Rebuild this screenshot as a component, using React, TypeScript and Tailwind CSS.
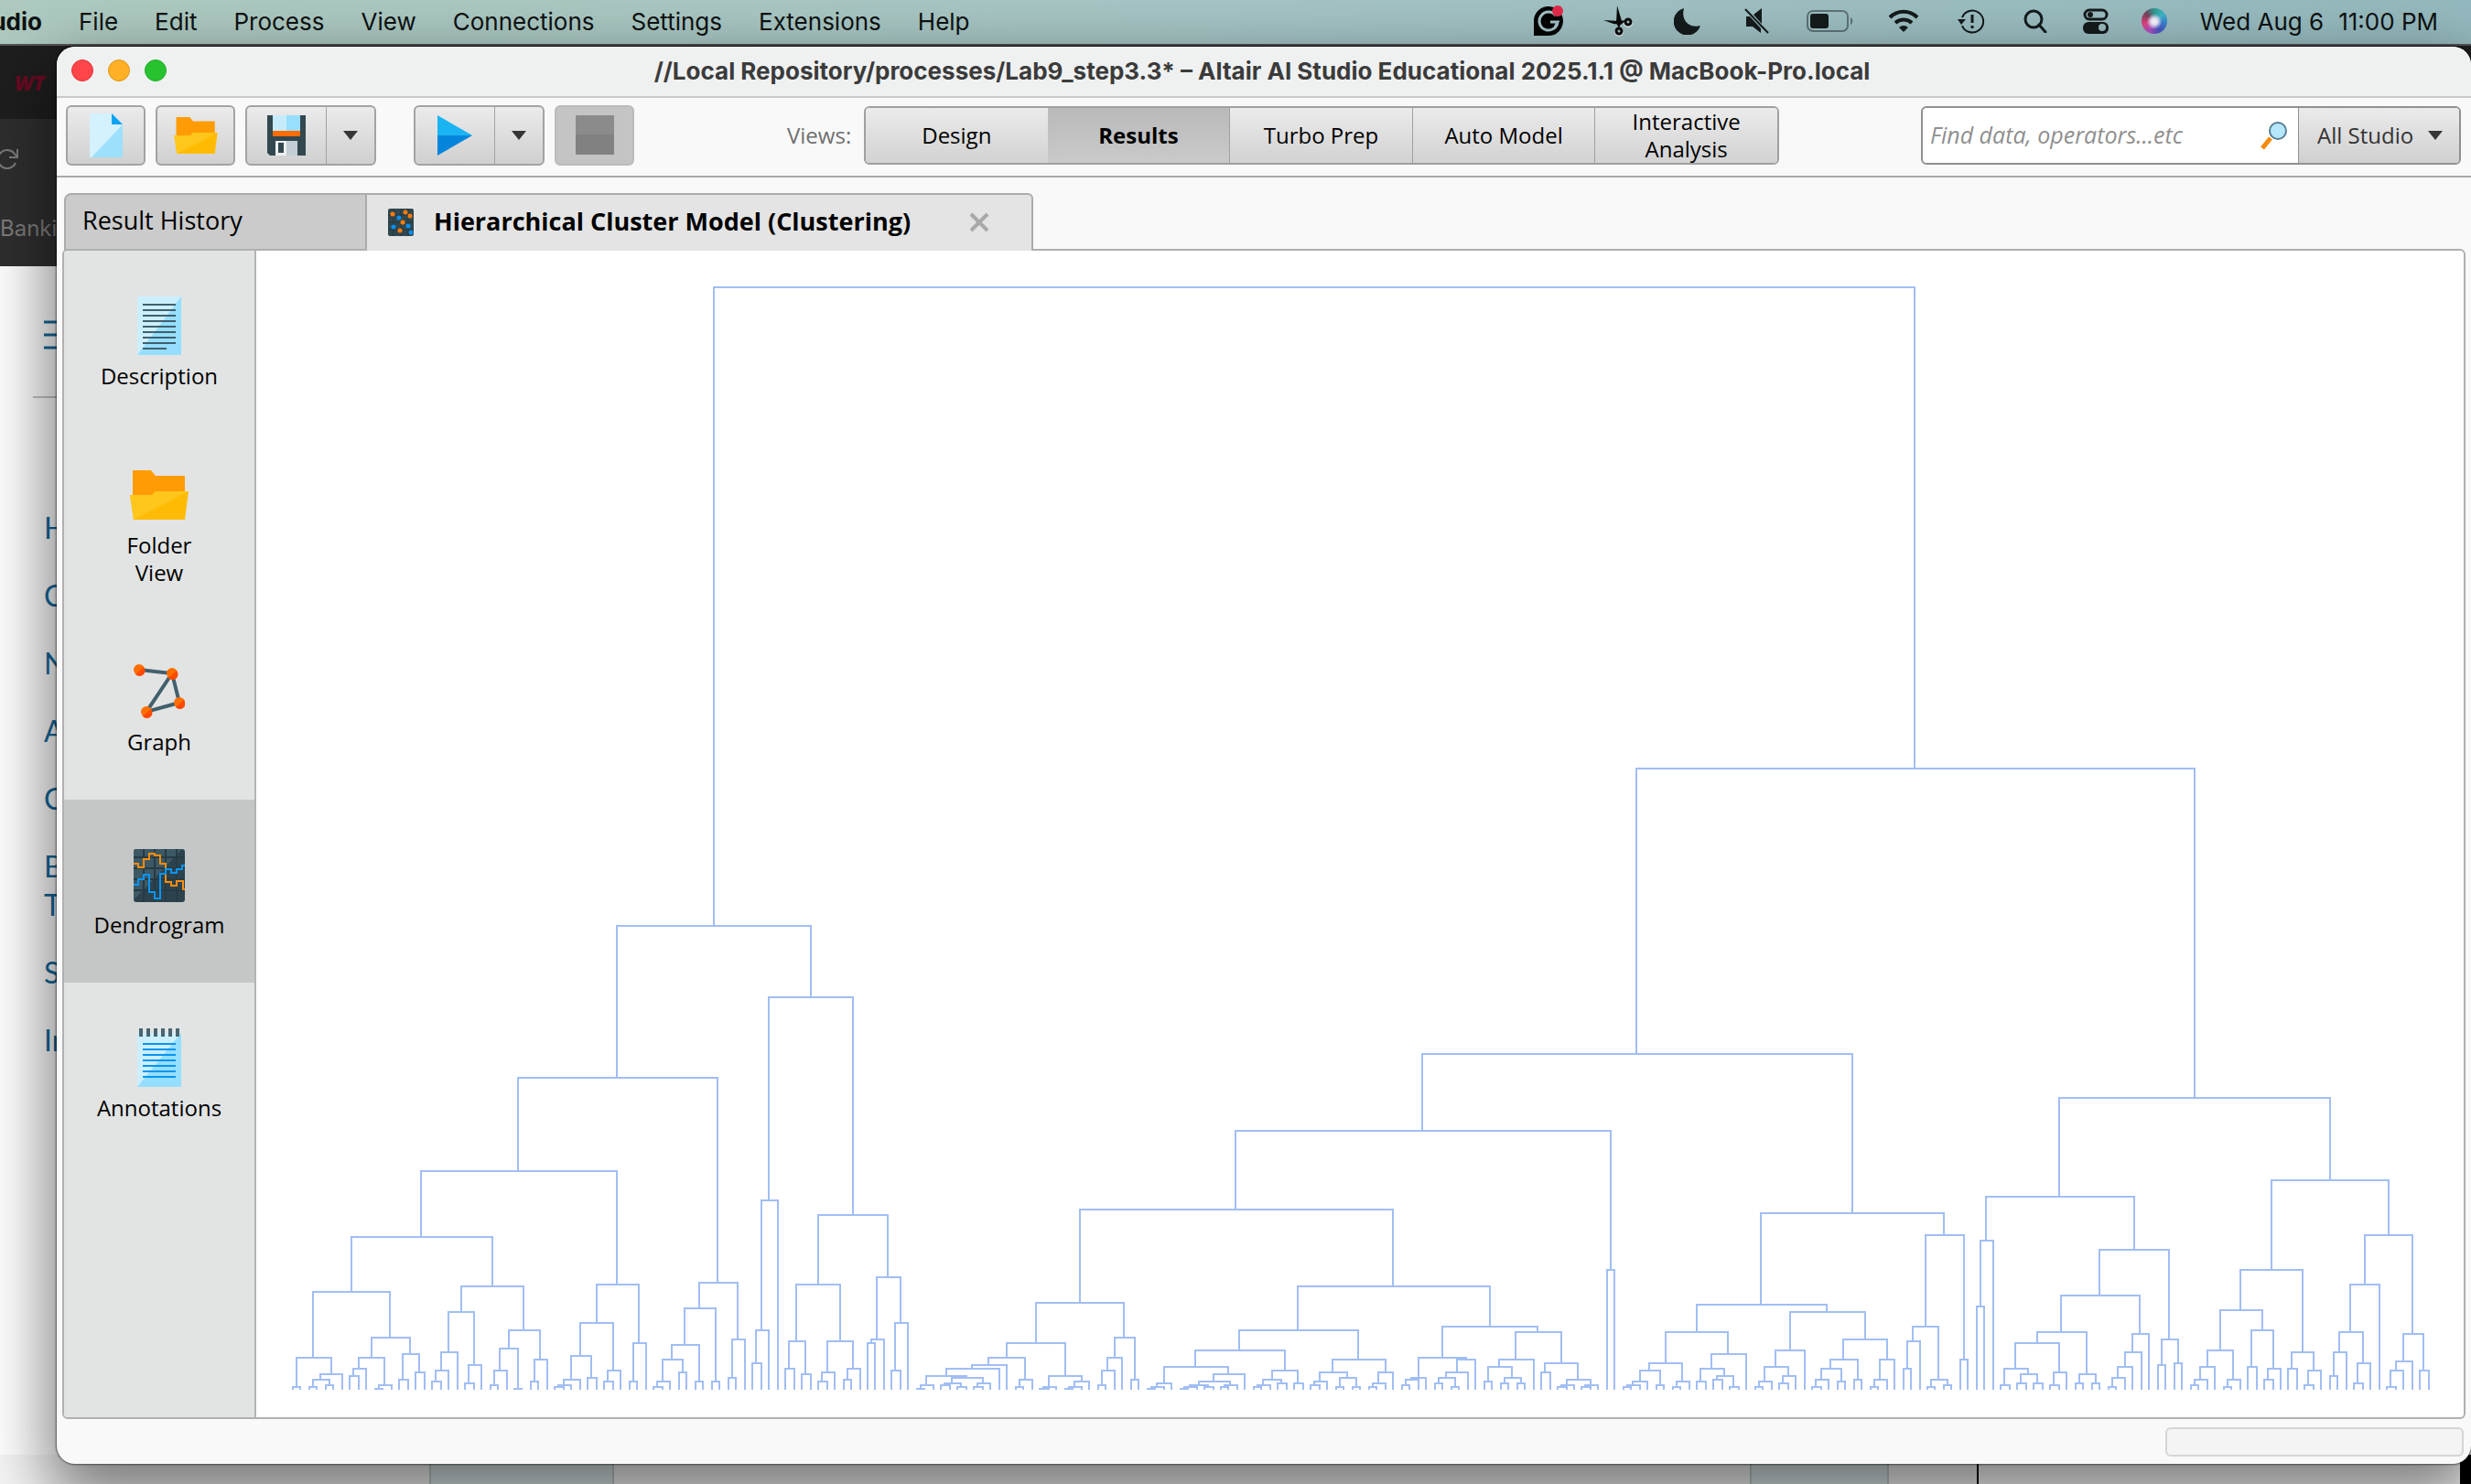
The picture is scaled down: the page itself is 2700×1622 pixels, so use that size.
import React from "react";

/* ------------------------------------------------------------------ */
/* Dendrogram data: (height left right), "." is a leaf                  */
/* ------------------------------------------------------------------ */

const LEFT_BRANCH = `(253
  (170
    (119
      (83
        (53 (17 (1 . .) (8 (5 (1 . .) (2 . .)) .))
            (28 (17 (11 (7 . .) .) (2 (0 . .) .)) (19 (5 . .) (9 . .))))
        (56 (42 (20 (10 (4 . .) .) .) (13 (3 . .) .))
            (32 (22 (10 (2 . .) .) (0 . .)) (16 (4 . .) .))))
      (57 (36 (18 (5 (2 (1 . .) .) .) (6 . .)) (10 (4 . .) .)) (25 (4 . .) .)))
    (58 (44 (24 (16 (4 (1 . .) .) (9 . .)) (4 . .)) (4 . .)) (27 (6 . .) .)))
  (214
    (103 (32 (14 . .) .) .)
    (95 (57 (26 (11 . .) (8 . .)) (26 (9 (4 . .) .) (11 (5 . .) .)))
        (61 (27 (25 . .) .) (36 (10 . .) .)))))`;

const MIDDLE_BRANCH = `(183
  (141
    (98
      (47
        (25 (17 (13 (11 (7 (2 (0 . .) .) (6 (3 (2 . .) (1 . .)) (3 (1 . .) .))) .) .) (5 (1 . .) .))
            (7 (1 (0 . .) .) (4 (1 (0 . .) .) .)))
        (28 (17 (10 (2 . .) .) .) (5 . .)))
      (56
        (32
          (21 (12 (3 (1 (0 . .) .) .) (8 (4 (2 (1 (0 . .) .) (1 . .)) (2 (1 . .) .)) .))
              (10 (5 (2 (1 . .) .) (3 . .)) (3 . .)))
          (16 (9 (4 (2 . .) .) (6 (1 . .) (1 . .))) (9 (3 (1 . .) .) .)))
        (34
          (17 (6 (5 (2 . .) .) .) (16 (9 (6 (3 . .) (1 . .)) .) .))
          (31 (16 (12 (4 . .) (6 (3 . .) (3 . .))) .)
              (14 (9 . .) (5 (2 (1 . .) .) (2 (1 . .) .)))))))
    (65 . .))
  (96
    (46
      (31 (14 (10 (4 (2 (1 . .) .) .) (2 . .)) (4 (1 . .) .))
          (19 (11 (4 . .) (7 (5 . .) (1 . .))) .))
      (42 (21 (12 (4 (1 . .) .) (7 (3 . .) .)) .)
          (27 (16 (11 (5 (1 . .) .) (4 . .)) (5 . .)) (16 (5 (1 . .) .) .))))
    (84 (34 (26 (11 . .) .) (5 (1 . .) (2 . .))) (16 . .))))`;

const RIGHT_BRANCH = `(159
  (105
    (81 (45 . .) .)
    (76
      (51 (31 (25 (11 (2 . .) (8 (3 . .) (3 . .))) (9 (2 . .) .)) (8 (3 . .) (3 . .)))
          (30 (20 (12 (6 (1 . .) .) .) .) .))
      (27 (13 . .) (14 . .))))
  (114
    (65 (43 (21 (12 (5 (2 . .) .) .) (5 (1 . .) .)) (32 (12 . .) (11 (5 . .) .)))
        (20 (11 . .) (10 (2 . .) .)))
    (84 (57 (31 (20 (7 . .) .) (14 (3 . .) .)) .)
        (30 (15 (10 (1 . .) .) .) (10 . .)))))`;

const TREE = `(602 ${LEFT_BRANCH} (339 ${MIDDLE_BRANCH} ${RIGHT_BRANCH}))`;

const LEAF_COUNT = 261;
const CHART_W = 2412;
const CHART_H = 1275;
const BASELINE = 1244;
const FIRST_LEAF = 20.3;
const LEAF_SPAN = 1167;

type Point = { pos: number; y: number };

function buildPath(source: string): string {
  const tokens = source.match(/[().]|\d+/g) ?? [];
  const parts: string[] = [];
  let cursor = 0;
  let leaf = 0;
  const read = (): Point => {
    const token = tokens[cursor++];
    if (token === ".") {
      const pos = Math.floor(FIRST_LEAF + (LEAF_SPAN * leaf++) / (LEAF_COUNT - 1));
      return { pos, y: BASELINE + 1 };
    }
    const y = BASELINE - Number(tokens[cursor++]) * 2;
    const left = read();
    const right = read();
    cursor++;
    parts.push(`M${left.pos * 2} ${left.y}V${y}H${right.pos * 2}V${right.y}`);
    return { pos: Math.floor((left.pos + right.pos) / 2), y };
  };
  read();
  return parts.join("");
}

const DENDROGRAM_PATH = buildPath(TREE);

function DendrogramChart() {
  return (
    <svg
      className="block h-full w-full"
      viewBox={`0 0 ${CHART_W} ${CHART_H}`}
      preserveAspectRatio="none"
      role="img"
      aria-label="Dendrogram"
    >
      <path d={DENDROGRAM_PATH} fill="none" stroke="#a1bef4" strokeWidth="2" shapeRendering="crispEdges" />
    </svg>
  );
}

/* ------------------------------------------------------------------ */
/* Menu bar                                                             */
/* ------------------------------------------------------------------ */

const MENUS = ["File", "Edit", "Process", "View", "Connections", "Settings", "Extensions", "Help"];

function StatusIcons() {
  return (
    <div className="flex items-center text-[#151b1c]">
      <button aria-label="Grammarly" className="flex w-19 justify-center">
        <svg width="34" height="34" viewBox="0 0 34 34">
          <path d="M1 33V16A16 16 0 1 1 17 33Z" fill="#050505" />
          <path d="M25 11A10 10 0 1 0 27 18H19M19 18h8l-3 6" fill="none" stroke="#a3c3c6" strokeWidth="3" />
          <circle cx="27" cy="6" r="6" fill="#e2294b" />
        </svg>
      </button>
      <button aria-label="Scissors" className="flex w-19 justify-center">
        <svg width="32" height="34" viewBox="0 0 32 34">
          <g stroke="#e8f0f0" strokeWidth="2" fill="none">
            <circle cx="17" cy="29" r="4" />
            <circle cx="27" cy="19" r="4" />
          </g>
          <path d="M15 0l5 17-3 8-3-6zM0 16l17 1 8-1-6 5-8-1z" fill="#0b0b0b" />
          <g stroke="#0b0b0b" strokeWidth="3" fill="none">
            <circle cx="17" cy="28" r="3" />
            <circle cx="27" cy="18" r="3" />
          </g>
        </svg>
      </button>
      <button aria-label="Do not disturb" className="flex w-19 justify-center">
        <svg width="30" height="30" viewBox="0 0 30 30">
          <path d="M11 1A15 15 0 1 0 29 20C19 23 7 16 11 1Z" fill="currentColor" />
        </svg>
      </button>
      <button aria-label="Muted" className="flex w-19 justify-center">
        <svg width="30" height="30" viewBox="0 0 30 30" fill="currentColor">
          <path d="M3 10h4l12 13v5l-9-7H3zM11 8l9-7v17z" />
          <path d="M2 2l25 26" stroke="currentColor" strokeWidth="2" />
        </svg>
      </button>
      <button aria-label="Battery" className="flex w-21 justify-center">
        <svg width="52" height="26" viewBox="0 0 52 26">
          <rect x="1" y="2" width="44" height="22" rx="6" fill="none" stroke="#5c7478" strokeWidth="2" />
          <rect x="4" y="5" width="20" height="16" rx="3" fill="currentColor" />
          <path d="M48 9c3 1 3 7 0 8z" fill="#5c7478" />
        </svg>
      </button>
      <button aria-label="Wi-Fi" className="flex w-19 justify-center">
        <svg width="34" height="26" viewBox="0 0 34 26" fill="none" stroke="currentColor" strokeWidth="4">
          <path d="M2 9a21 21 0 0 1 30 0" />
          <path d="M8 15a13 13 0 0 1 18 0" />
          <path d="M17 25l-5-5a7 7 0 0 1 10 0z" fill="currentColor" stroke="none" />
        </svg>
      </button>
      <button aria-label="Time Machine" className="flex w-18 justify-center">
        <svg width="30" height="28" viewBox="0 0 30 28" fill="none" stroke="currentColor" strokeWidth="2">
          <path d="M5 10A12 12 0 1 1 5 19" />
          <path d="M0 12h9l-5 6z" fill="currentColor" stroke="none" />
          <path d="M16 7v9M16 19v3" strokeWidth="3" />
        </svg>
      </button>
      <button aria-label="Search" className="flex w-17 justify-center">
        <svg width="26" height="26" viewBox="0 0 26 26" fill="none" stroke="currentColor" strokeWidth="3">
          <circle cx="11" cy="11" r="9" />
          <path d="M17 17l7 8" strokeLinecap="round" />
        </svg>
      </button>
      <button aria-label="Control Center" className="flex w-16 justify-center">
        <svg width="28" height="28" viewBox="0 0 28 28">
          <rect x="2" y="2" width="24" height="10" rx="5" fill="none" stroke="currentColor" strokeWidth="3" />
          <circle cx="8" cy="7" r="3" fill="currentColor" />
          <rect x="0" y="15" width="28" height="13" rx="6" fill="currentColor" />
          <circle cx="21" cy="21" r="4" fill="#9abcc0" />
        </svg>
      </button>
      <button aria-label="Siri" className="flex w-16 justify-center">
        <span className="h-7 w-7 rounded-full bg-[radial-gradient(circle_at_50%_52%,#ffffff_0,#e9e4fa_18%,transparent_42%),conic-gradient(#2f9a90,#3fb6c4,#3a7fd0,#4b53c0,#b04fc0,#e0457f,#7d3f5a,#2f9a90)]" />
      </button>
    </div>
  );
}

function MenuBar() {
  return (
    <header className="flex h-12 shrink-0 items-center justify-between bg-linear-to-r from-[#aecac0] via-[#a5c4c4] to-[#94b9be] pr-9 pb-[2px] font-['Inter','Liberation_Sans',sans-serif] text-[26px] text-[#0e1212]">
      <nav className="flex items-center gap-10">
        <div className="flex w-[46px] justify-end overflow-hidden whitespace-nowrap font-bold">udio</div>
        {MENUS.map((menu) => (
          <button key={menu}>{menu}</button>
        ))}
      </nav>
      <div className="flex items-center gap-[18px]">
        <StatusIcons />
        <div className="flex gap-4 whitespace-nowrap">
          <span>Wed Aug 6</span>
          <span>11:00 PM</span>
        </div>
      </div>
    </header>
  );
}

/* ------------------------------------------------------------------ */
/* Browser page behind the application                                  */
/* ------------------------------------------------------------------ */

function BackgroundBrowser() {
  return (
    <div className="absolute inset-0 flex flex-col overflow-hidden bg-white">
      <div className="h-[82px] shrink-0 border-t-2 border-[#555555] bg-[#1e1e1e] pt-6 pl-4 font-['Open_Sans',sans-serif] text-[22px] font-extrabold italic text-[#6b0a22]">
        WT
      </div>
      <div className="flex h-[161px] shrink-0 flex-col gap-12 bg-[#2f2f2f] pt-8 text-[#7c7c7c]">
        <svg width="22" height="26" viewBox="0 0 22 26" fill="none" stroke="currentColor" strokeWidth="2">
          <path d="M17 16A10 10 0 1 1 15 5l4 5M19 1v9h-9" />
        </svg>
        <span className="font-['Inter',sans-serif] text-[24px] leading-7">Banki</span>
      </div>
      <div className="flex min-h-0 flex-1 flex-col justify-between">
        <nav className="flex flex-col pt-14 font-['Lato',sans-serif] text-[32px] text-[#14699d]">
          <svg className="ml-12" width="40" height="40" viewBox="0 0 40 40" stroke="currentColor" strokeWidth="3">
            <path d="M0 5h40M0 19h40M0 33h40" />
          </svg>
          <hr className="mt-[46px] ml-9 w-20 border-t-2 border-[#c3c7ca]" />
          <div className="mt-[121px] ml-12 flex w-5 flex-col gap-8 leading-[42px]">
            <a href="#home">H</a>
            <a href="#content">C</a>
            <a href="#news">N</a>
            <a href="#activities">A</a>
            <a href="#classlist">C</a>
            <a href="#book">
              B<br />T
            </a>
            <a href="#syllabus">S</a>
            <a href="#instructor">In</a>
          </div>
        </nav>
        <div className="flex h-8 justify-end bg-[#f6f6f6]">
          <div className="ml-[469px] w-[202px] border-x-2 border-[#c0cacc] bg-[#dbe6e8]" />
          <div className="flex-1" />
          <div className="w-[152px] border-x-2 border-[#c0cacc] bg-[#dbe6e8]" />
          <div className="w-24" />
          <div className="w-[528px] border-l-2 border-black bg-white" />
          <div className="w-3 bg-black" />
        </div>
      </div>
    </div>
  );
}

/* ------------------------------------------------------------------ */
/* Application icons                                                    */
/* ------------------------------------------------------------------ */

function FolderIcon({ className }: { className: string }) {
  return (
    <svg className={className} viewBox="0 0 64 54">
      <path d="M3 0h20l5 6h32v28H3z" fill="#ff9c05" />
      <path d="M0 27h24l4-4h36l-4 31H4z" fill="#ffbb04" />
      <path d="M0 27h24l4-4h36L4 54z" fill="#ffc61c" />
    </svg>
  );
}

function DescriptionIcon() {
  return (
    <svg className="h-16 w-12" viewBox="0 0 48 64">
      <path d="M0 0h48v64H0z" fill="#96deff" />
      <path d="M0 0h48L0 64z" fill="#ccefff" />
      <path d="M6 9h36M6 15h36M6 21h36M6 27h36M6 33h36M6 39h36M6 45h36M6 51h36M6 57h26" stroke="#40606e" strokeWidth="2" />
    </svg>
  );
}

function GraphIcon() {
  const nodes = [
    [6, 8],
    [42, 12],
    [50, 44],
    [14, 54],
  ];
  return (
    <svg className="h-16 w-14" viewBox="0 0 56 64">
      <path d="M6 8l36 4 8 32-36 10 28-42" fill="none" stroke="#42606c" strokeWidth="4" />
      {nodes.map(([x, y]) => (
        <g key={`${x}-${y}`}>
          <circle cx={x} cy={y} r="6" fill="#ff6f00" />
          <path d={`M${x + 5} ${y - 3}a6 6 0 0 1-9 8z`} fill="#ff4a05" />
        </g>
      ))}
    </svg>
  );
}

function DendrogramIcon() {
  return (
    <svg className="h-16 w-14" viewBox="0 0 56 64">
      <rect y="4" width="56" height="58" rx="3" fill="#2c434e" />
      <path d="M3 4h50L0 60V7a3 3 0 0 1 3-3z" fill="#3c5965" />
      <path d="M11 4v58M23 4v58M35 4v58M47 4v58M0 13h56M0 25h56M0 37h56M0 49h56" stroke="#273b45" strokeWidth="2" />
      <g fill="none" strokeWidth="2">
        <path d="M0 20h5v4h6v-9h6V9h6v2h6v9h6v20h6v4h6v-5h7v9h5" stroke="#ff8c08" />
        <path d="M0 43h5v-6h6v-5h6v19h6v7h6V31h6v-5h6v4h6v-4h6v-4h5" stroke="#0a95f2" />
      </g>
    </svg>
  );
}

function AnnotationsIcon() {
  return (
    <svg className="h-16 w-12" viewBox="0 0 48 64">
      <path d="M0 5h48v59H0z" fill="#96deff" />
      <path d="M0 5h48L0 64z" fill="#ccefff" />
      <path d="M4 0v9M12 0v9M20 0v9M28 0v9M36 0v9M44 0v9" stroke="#4a6570" strokeWidth="4" />
      <path d="M6 17h36M6 23h36M6 29h36M6 35h36M6 41h36M6 47h36M6 53h36" stroke="#0695ee" strokeWidth="2" />
    </svg>
  );
}

function ClusterIcon() {
  const dots: [number, number, string][] = [
    [5, 6, "#ff7c0a"],
    [19, 4, "#ff7c0a"],
    [24, 8, "#ff7c0a"],
    [12, 10, "#0a8df0"],
    [16, 15, "#ff7c0a"],
    [6, 20, "#0a8df0"],
    [22, 19, "#0a8df0"],
    [13, 24, "#ff7c0a"],
    [25, 26, "#0a8df0"],
  ];
  return (
    <svg className="h-[30px] w-7" viewBox="0 0 28 30">
      <rect width="28" height="30" rx="2" fill="#30474f" />
      <path d="M6 0v30M14 0v30M22 0v30M0 7h28M0 15h28M0 23h28" stroke="#25383f" />
      {dots.map(([x, y, color]) => (
        <circle key={`${x}-${y}`} cx={x} cy={y} r="2.5" fill={color} />
      ))}
    </svg>
  );
}

function Triangle() {
  return (
    <svg width="16" height="10" viewBox="0 0 16 10" fill="#363636">
      <path d="M0 0h16L8 10z" />
    </svg>
  );
}

/* ------------------------------------------------------------------ */
/* Tool bar                                                             */
/* ------------------------------------------------------------------ */

const VIEWS = ["Design", "Results", "Turbo Prep", "Auto Model", "Interactive Analysis"];

function Toolbar() {
  return (
    <div className="flex h-[87px] shrink-0 items-center border-b-2 border-[#a9a9a9] pr-[11px] pb-1 pl-[10px] text-[24px]">
      <div className="flex gap-[11px]">
        <button
          aria-label="New process"
          className="flex h-[66px] w-[87px] items-center justify-center rounded-md border-2 border-[#a3a3a3] bg-linear-to-b from-[#ebebeb] to-[#d0d0d0]"
        >
          <svg width="36" height="48" viewBox="0 0 36 48">
            <path d="M0 0h24l12 12v36H0z" fill="#9ce0fc" />
            <path d="M0 0h24l12 12L2 48H0z" fill="#d4f1fe" />
            <path d="M24 0v12h12z" fill="#0aa2f2" />
          </svg>
        </button>
        <button
          aria-label="Open process"
          className="flex h-[66px] w-[87px] items-center justify-center rounded-md border-2 border-[#a3a3a3] bg-linear-to-b from-[#ebebeb] to-[#d0d0d0]"
        >
          <FolderIcon className="h-10 w-12" />
        </button>
        <div className="flex h-[66px] rounded-md border-2 border-[#a3a3a3] bg-linear-to-b from-[#ebebeb] to-[#d0d0d0]">
          <button aria-label="Save process" className="flex w-[87px] items-center justify-center border-r border-[#a3a3a3]">
            <svg width="42" height="44" viewBox="0 0 42 44">
              <path d="M0 0h42v44H3l-3-3z" fill="#33474f" />
              <path d="M6 0h30v17H6z" fill="#97dffc" />
              <path d="M6 0h15v17H6z" fill="#c6ecfb" />
              <path d="M6 17h30v6H6z" fill="#ff6c02" />
              <path d="M9 28h24v16H9z" fill="#c2ced3" />
              <path d="M9 28h12v16H9z" fill="#eceff1" />
              <path d="M12 30h6v11h-6z" fill="#33474f" />
            </svg>
          </button>
          <button aria-label="Save options" className="flex w-[52px] items-center justify-center">
            <Triangle />
          </button>
        </div>
      </div>
      <div className="ml-[41px] flex gap-[11px]">
        <div className="flex h-[66px] rounded-md border-2 border-[#a3a3a3] bg-linear-to-b from-[#ebebeb] to-[#d0d0d0]">
          <button aria-label="Run process" className="flex w-[87px] items-center justify-center border-r border-[#a3a3a3]">
            <svg width="38" height="44" viewBox="0 0 38 44">
              <path d="M0 0l38 22H0z" fill="#1bb4f2" />
              <path d="M0 44l38-22H0z" fill="#0586dc" />
            </svg>
          </button>
          <button aria-label="Run options" className="flex w-[52px] items-center justify-center">
            <Triangle />
          </button>
        </div>
        <button
          aria-label="Stop process"
          disabled
          className="flex h-[66px] w-[87px] items-center justify-center rounded-md border-2 border-[#bbbbbb] bg-[#c4c4c4]"
        >
          <span className="h-[43px] w-[42px] bg-linear-to-b from-[#8b8b8b] from-50% to-[#818181] to-50%" />
        </button>
      </div>

      <span className="ml-[167px] w-[84px] shrink-0 text-[#6f6f6f]">Views:</span>
      <div role="tablist" className="flex h-16 w-[1000px] overflow-hidden rounded-md border-2 border-[#a0a0a0]">
        {VIEWS.map((view) => (
          <button
            key={view}
            role="tab"
            aria-selected={view === "Results"}
            className={
              view === "Results"
                ? "flex-1 bg-linear-to-b from-[#b9b9b9] to-[#cacaca] px-5 font-bold leading-[30px] text-black"
                : "flex-1 border-[#a0a0a0] bg-linear-to-b from-[#ebebeb] to-[#d2d2d2] px-5 leading-[30px] text-black not-first:border-l"
            }
          >
            {view}
          </button>
        ))}
      </div>

      <div className="ml-auto flex h-16 w-[590px] overflow-hidden rounded-md border-2 border-[#909090] bg-white">
        <input
          aria-label="Search"
          placeholder="Find data, operators...etc"
          className="min-w-0 flex-1 bg-transparent pl-2 text-[25px] italic outline-none placeholder:text-[#8f8f8f]"
        />
        <button aria-label="Search" className="flex w-13 items-center justify-center">
          <svg width="30" height="32" viewBox="0 0 30 32">
            <path d="M11 19L2 30" stroke="#f58a0b" strokeWidth="5" />
            <circle cx="19" cy="11" r="9" fill="#b5e6fb" stroke="#5a7f95" strokeWidth="2" />
          </svg>
        </button>
        <div className="relative w-[176px] border-l border-[#909090] bg-linear-to-b from-[#ebebeb] to-[#d0d0d0]">
          <select aria-label="Search scope" className="h-full w-full appearance-none pl-5 text-[#333333]">
            <option>All Studio</option>
          </select>
          <span className="pointer-events-none absolute inset-y-0 right-[18px] flex items-center">
            <Triangle />
          </span>
        </div>
      </div>
    </div>
  );
}

/* ------------------------------------------------------------------ */
/* Result area                                                          */
/* ------------------------------------------------------------------ */

const SIDE_ITEMS = [
  { label: "Description", icon: <DescriptionIcon />, active: false },
  {
    label: "Folder View",
    icon: (
      <span className="flex h-16 items-center">
        <FolderIcon className="h-[54px] w-16" />
      </span>
    ),
    active: false,
  },
  { label: "Graph", icon: <GraphIcon />, active: false },
  { label: "Dendrogram", icon: <DendrogramIcon />, active: true },
  { label: "Annotations", icon: <AnnotationsIcon />, active: false },
];

function ResultTabs() {
  return (
    <div role="tablist" className="flex h-[61px] shrink-0 pl-2 text-[27px] text-black">
      <button
        role="tab"
        aria-selected="false"
        className="mb-[-2px] w-[331px] rounded-tl-lg border-2 border-[#ababab] bg-[#cbcbcb] pb-[2px] pl-[18px] text-left"
      >
        Result History
      </button>
      <div
        role="tab"
        aria-selected="true"
        className="relative z-10 mb-[-2px] flex w-[728px] items-center rounded-tr-md border-t-2 border-r-2 border-[#ababab] bg-[#e4e4e4] pr-[46px] pb-[2px] pl-[23px] font-bold"
      >
        <ClusterIcon />
        <span className="ml-[22px] whitespace-nowrap">Hierarchical Cluster Model (Clustering)</span>
        <button aria-label="Close tab" className="ml-auto">
          <svg width="22" height="22" viewBox="0 0 22 22" stroke="#a9a9a9" strokeWidth="4">
            <path d="M2 2l18 18M20 2L2 20" />
          </svg>
        </button>
      </div>
    </div>
  );
}

function StudioWindow() {
  return (
    <main className="relative mt-[3px] mb-[22px] ml-[62px] flex min-w-0 flex-1 flex-col overflow-hidden rounded-[20px] bg-[#f9f9f9] font-['Open_Sans','Noto_Sans',sans-serif] shadow-[0_0_2px_1px_rgba(0,0,0,0.5),0_30px_70px_10px_rgba(0,0,0,0.5)]">
      <div className="flex h-14 shrink-0 items-center border-b-2 border-[#c9c9c9] bg-[#eff1f1] px-4 pb-[2px]">
        <div className="flex w-30 gap-4">
          <button aria-label="Close" className="h-6 w-6 rounded-full border border-[#e0343a] bg-[#fe4549]" />
          <button aria-label="Minimize" className="h-6 w-6 rounded-full border border-[#e0981a] bg-[#ffb024]" />
          <button aria-label="Zoom" className="h-6 w-6 rounded-full border border-[#1fae28] bg-[#29c22f]" />
        </div>
        <h1 className="flex-1 pr-[124px] text-center font-['Inter',sans-serif] text-[26px] font-bold text-[#3b3b3b]">
          //Local Repository/processes/Lab9_step3.3* – Altair AI Studio Educational 2025.1.1 @ MacBook-Pro.local
        </h1>
      </div>
      <Toolbar />
      <div className="h-[17px] shrink-0" />
      <ResultTabs />
      <div className="mr-[6px] ml-[6px] flex min-h-0 flex-1 overflow-hidden rounded-md border-2 border-[#b0b0b0] bg-white">
        <aside className="flex w-[210px] shrink-0 flex-col border-r-2 border-[#b3b3b3] bg-[#e2e4e4]">
          {SIDE_ITEMS.map(({ label, icon, active }) => (
            <button
              key={label}
              aria-pressed={active}
              className={
                active
                  ? "flex h-50 shrink-0 flex-col items-center justify-center gap-2 bg-[#c5c7c6] px-6 pt-[2px] text-[24px] leading-[30px] text-black"
                  : "flex h-50 shrink-0 flex-col items-center justify-center gap-2 px-6 pt-[2px] text-[24px] leading-[30px] text-black"
              }
            >
              {icon}
              <span className={label === "Folder View" ? "w-24" : ""}>{label}</span>
            </button>
          ))}
        </aside>
        <section className="min-w-0 flex-1">
          <DendrogramChart />
        </section>
      </div>
      <footer className="flex h-[49px] shrink-0 items-center justify-end pr-2">
        <div className="h-8 w-[326px] rounded-md border-2 border-[#d5d5d5] bg-[#f4f4f4]" />
      </footer>
    </main>
  );
}

export default function App() {
  return (
    <div className="flex h-screen w-full flex-col overflow-hidden bg-white">
      <MenuBar />
      <div className="relative flex min-h-0 flex-1">
        <BackgroundBrowser />
        <StudioWindow />
      </div>
    </div>
  );
}
